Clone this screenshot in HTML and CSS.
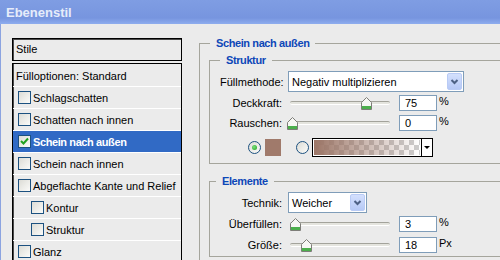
FILE: index.html
```html
<!DOCTYPE html>
<html lang="de">
<head>
    <meta charset="UTF-8">
    <title>Ebenenstil</title>
    <link rel="stylesheet" href="styles.css">
</head>
<body>
    <div class="titlebar">Ebenenstil</div>
    <div class="dialog">
        <div class="styles-panel">
            <div class="styles-head">Stile</div>
            <ul class="styles-list">
                <li class="plain">Fülloptionen: Standard</li>
                <li><span class="check"></span>Schlagschatten</li>
                <li><span class="check"></span>Schatten nach innen</li>
                <li class="selected"><span class="check"><svg width="11" height="11" viewBox="0 0 11 11"><path d="M2 5 L4.5 7.5 L9 2.5" fill="none" stroke="#21a121" stroke-width="2"/></svg></span>Schein nach außen</li>
                <li><span class="check"></span>Schein nach innen</li>
                <li><span class="check"></span>Abgeflachte Kante und Relief</li>
                <li class="sub"><span class="check"></span>Kontur</li>
                <li class="sub"><span class="check"></span>Struktur</li>
                <li><span class="check"></span>Glanz</li>
            </ul>
        </div>

        <div class="settings">
            <fieldset class="group outer">
                <legend>Schein nach außen</legend>

                <fieldset class="group inner">
                    <legend>Struktur</legend>
                    <div class="row">
                        <span class="label">Füllmethode:</span>
                        <div class="select wide">
                            <span>Negativ multiplizieren</span>
                            <span class="select-btn"><svg width="13" height="15" viewBox="0 0 13 15"><path d="M3.5 6 L6.5 9 L9.5 6" fill="none" stroke="#4d6185" stroke-width="2"/></svg></span>
                        </div>
                    </div>
                    <div class="row gap3">
                        <span class="label">Deckkraft:</span>
                        <div class="slider">
                            <svg class="thumb" style="left: 71px" width="11" height="13" viewBox="0 0 11 13"><path d="M5.5 0.5 L10.5 5.5 V12.5 H0.5 V5.5 Z" fill="#f7f7f4" stroke="#7d7d78"/><rect x="1" y="9" width="9" height="3" fill="#4caf4c"/></svg>
                        </div>
                        <span class="field">75</span>
                        <span class="unit">%</span>
                    </div>
                    <div class="row gap4">
                        <span class="label">Rauschen:</span>
                        <div class="slider">
                            <svg class="thumb" style="left: -3px" width="11" height="13" viewBox="0 0 11 13"><path d="M5.5 0.5 L10.5 5.5 V12.5 H0.5 V5.5 Z" fill="#f7f7f4" stroke="#7d7d78"/><rect x="1" y="9" width="9" height="3" fill="#4caf4c"/></svg>
                        </div>
                        <span class="field">0</span>
                        <span class="unit">%</span>
                    </div>
                    <div class="swatch-row">
                        <span class="radio on"></span>
                        <span class="swatch"></span>
                        <span class="radio second"></span>
                        <div class="gradient">
                            <span class="gradient-fill"></span>
                            <span class="gradient-arrow"></span>
                        </div>
                    </div>
                </fieldset>

                <fieldset class="group inner elements">
                    <legend>Elemente</legend>
                    <div class="row">
                        <span class="label">Technik:</span>
                        <div class="select narrow">
                            <span>Weicher</span>
                            <span class="select-btn"><svg width="13" height="15" viewBox="0 0 13 15"><path d="M3.5 6 L6.5 9 L9.5 6" fill="none" stroke="#4d6185" stroke-width="2"/></svg></span>
                        </div>
                    </div>
                    <div class="row gap3">
                        <span class="label">Überfüllen:</span>
                        <div class="slider">
                            <svg class="thumb" style="left: 0px" width="11" height="13" viewBox="0 0 11 13"><path d="M5.5 0.5 L10.5 5.5 V12.5 H0.5 V5.5 Z" fill="#f7f7f4" stroke="#7d7d78"/><rect x="1" y="9" width="9" height="3" fill="#4caf4c"/></svg>
                        </div>
                        <span class="field">3</span>
                        <span class="unit">%</span>
                    </div>
                    <div class="row gap5">
                        <span class="label">Größe:</span>
                        <div class="slider">
                            <svg class="thumb" style="left: 11px" width="11" height="13" viewBox="0 0 11 13"><path d="M5.5 0.5 L10.5 5.5 V12.5 H0.5 V5.5 Z" fill="#f7f7f4" stroke="#7d7d78"/><rect x="1" y="9" width="9" height="3" fill="#4caf4c"/></svg>
                        </div>
                        <span class="field">18</span>
                        <span class="unit">Px</span>
                    </div>
                </fieldset>
            </fieldset>
        </div>
    </div>
</body>
</html>
```

FILE: styles.css
```css
body {
    margin: 0;
    background-color: #ebebeb;
    font-family: "Liberation Sans", Arial, sans-serif;
    font-size: 11px;
    color: #000;
    overflow: hidden;
    height: 260px;
}
.titlebar {
    height: 24px;
    padding-left: 6px;
    line-height: 25px;
    font-size: 13px;
    font-weight: bold;
    color: #e6ecfa;
    background: linear-gradient(#7f9de3, #7795df 75%, #8eadee);
}
.dialog {
    display: flex;
    height: 236px;
    box-sizing: border-box;
    padding: 12px 0 0 11px;
    border-left: 1px solid #8ba3e0;
}

/* styles list */
.styles-panel {
    width: 170px;
    flex: none;
    margin-top: 2px;
    display: flex;
    flex-direction: column;
}
.styles-head {
    height: 23px;
    box-sizing: border-box;
    border: 1px solid #000;
    box-shadow: inset 1px 1px 0 #4a4a4a;
    padding-left: 3px;
    line-height: 21px;
}
.styles-list {
    list-style: none;
    margin: 2px 0 0;
    padding: 1px 0 0;
    flex: 1;
    border: 1px solid #000;
    border-bottom: none;
    box-shadow: inset 1px 0 0 #4a4a4a;
    overflow: hidden;
}
.styles-list li {
    height: 21px;
    border-bottom: 1px solid #fff;
    display: flex;
    align-items: center;
    gap: 2px;
    padding-left: 5px;
    white-space: nowrap;
}
.styles-list li.plain {
    padding-left: 3px;
}
.styles-list li.sub {
    padding-left: 18px;
}
.styles-list li.selected {
    background-color: #316ac5;
    color: #fff;
    font-weight: bold;
    letter-spacing: -0.4px;
}
.check {
    width: 13px;
    height: 13px;
    flex: none;
    box-sizing: border-box;
    border: 1px solid #1c5180;
    background: linear-gradient(135deg, #dcdcd6, #fbfbf9);
    display: flex;
    align-items: center;
    justify-content: center;
}

/* settings */
.settings {
    margin-left: 17px;
    flex: 1;
    min-width: 0;
    overflow: hidden;
}
.group {
    margin: 0;
    min-width: 0;
    border: 1px solid #a5a59c;
    border-right: none;
}
.group legend {
    padding: 0 6px;
    line-height: 14px;
    font-weight: bold;
    color: #0d47b8;
    letter-spacing: -0.4px;
}
.outer {
    padding: 3px 0 0 9px;
    height: 224px;
    box-sizing: border-box;
    border-bottom: none;
}
.outer > legend {
    margin-left: 1px;
}
.inner {
    padding: 4px 0 6px 10px;
}
.elements {
    margin-top: 10px;
    padding-bottom: 3px;
}
.elements > legend {
    margin-left: -4px;
}
.row {
    display: flex;
    align-items: center;
    white-space: nowrap;
}
.row.gap3 { margin-top: 3px; }
.row.gap4 { margin-top: 4px; }
.row.gap5 { margin-top: 5px; }
.label {
    width: 62px;
    flex: none;
    text-align: right;
}
.select {
    margin-left: 6px;
    height: 21px;
    box-sizing: border-box;
    border: 1px solid #7f9db9;
    background-color: #fff;
    padding-left: 3px;
    display: flex;
    align-items: center;
    justify-content: space-between;
}
.select.wide { width: 176px; }
.select.narrow { width: 79px; }
.select-btn {
    width: 15px;
    height: 17px;
    margin-right: 1px;
    box-sizing: border-box;
    border: 1px solid #b9cbf5;
    border-radius: 2px;
    background: linear-gradient(#d4e0fd, #b6c9f6);
    display: flex;
    align-items: center;
    justify-content: center;
}
.slider {
    position: relative;
    margin-left: 8px;
    width: 100px;
    height: 16px;
    flex: none;
}
.slider::before {
    content: "";
    position: absolute;
    left: 0;
    right: 0;
    top: 6px;
    height: 2px;
    border-top: 1px solid #a3a39b;
    border-bottom: 1px solid #fff;
    border-radius: 2px;
    background-color: #e4e4de;
}
.thumb {
    position: absolute;
    top: 2px;
}
.field {
    margin-left: 9px;
    width: 38px;
    height: 16px;
    box-sizing: border-box;
    border: 1px solid #7f9db9;
    background-color: #fff;
    padding-left: 5px;
    line-height: 15px;
}
.unit {
    margin-left: 2px;
    align-self: flex-start;
    line-height: 13px;
}
.swatch-row {
    display: flex;
    align-items: center;
    height: 19px;
    margin-top: 7px;
    padding-left: 28px;
}
.radio {
    width: 13px;
    height: 13px;
    flex: none;
    box-sizing: border-box;
    border: 1px solid #1c5180;
    border-radius: 50%;
    background: linear-gradient(135deg, #dcdcd6, #fbfbf9);
    display: flex;
    align-items: center;
    justify-content: center;
}
.radio.on::after {
    content: "";
    width: 5px;
    height: 5px;
    border-radius: 50%;
    background: radial-gradient(circle at 40% 40%, #7be07b, #21a121);
}
.radio.second {
    margin-left: 15px;
}
.swatch {
    margin-left: 4px;
    width: 16px;
    height: 17px;
    background-color: #a07a6b;
}
.gradient {
    margin-left: 3px;
    width: 121px;
    height: 19px;
    box-sizing: border-box;
    border: 1px solid #000;
    background-color: #fff;
    display: flex;
}
.gradient-fill {
    flex: 1;
    margin: 1px;
    background:
        linear-gradient(to right, #9c7667, rgba(156, 118, 103, 0)),
        repeating-conic-gradient(#cdcdcd 0% 25%, #fff 0% 50%) 0 0 / 10px 10px;
}
.gradient-arrow {
    width: 10px;
    border-left: 1px solid #000;
    display: flex;
    align-items: center;
    justify-content: center;
}
.gradient-arrow::after {
    content: "";
    border-left: 3px solid transparent;
    border-right: 3px solid transparent;
    border-top: 3px solid #000;
}
```
